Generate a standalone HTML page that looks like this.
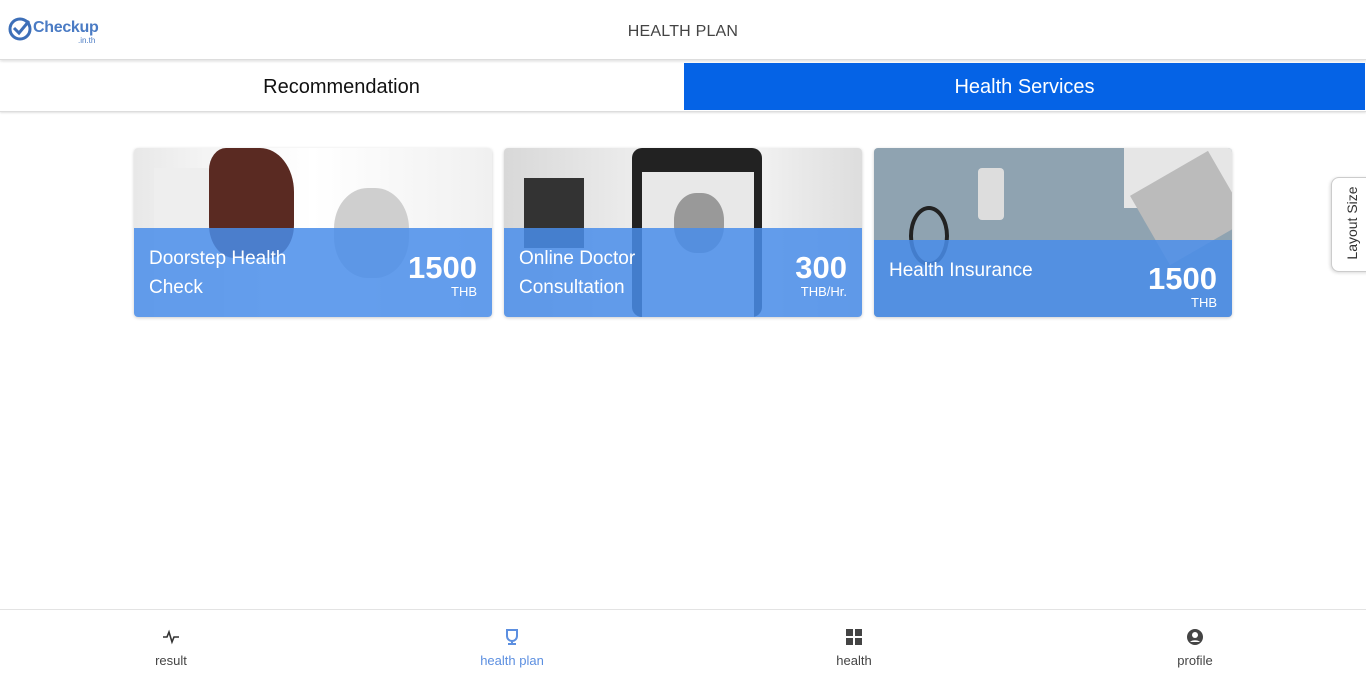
<!DOCTYPE html>
<html><head><meta charset="utf-8"><style>
*{box-sizing:border-box;margin:0;padding:0}
body{width:1366px;height:688px;overflow:hidden;background:#fff;font-family:"Liberation Sans",sans-serif;position:relative}
.hdr{position:absolute;top:0;left:0;width:1366px;height:60px;border-bottom:1px solid #ddd;box-shadow:0 1px 3px rgba(0,0,0,.15)}
.title{position:absolute;top:23px;left:0;width:1366px;text-align:center;font-size:16px;color:#444;letter-spacing:.2px}
.tabs{position:absolute;top:62px;left:0;width:1366px;height:50px;border-bottom:1px solid #ddd;box-shadow:0 1px 2px rgba(0,0,0,.12)}
.tab{position:absolute;top:0;height:49px;line-height:51px;text-align:center;font-size:20px}
.card{position:absolute;top:148px;width:358px;height:169px;border-radius:4px;overflow:hidden;box-shadow:0 1px 3px rgba(0,0,0,.2)}
.ov{position:absolute;left:0;right:0;bottom:0;background:rgba(73,141,234,.85);color:#fff}
.name{position:absolute;left:15px;font-size:19px;line-height:29px}
.price{position:absolute;right:15px;font-size:31px;font-weight:bold;text-align:right;line-height:30px}
.unit{position:absolute;right:15px;font-size:13px}
.nav{position:absolute;top:609px;left:0;width:1366px;height:79px;border-top:1px solid #e3e3e3}
.ni{position:absolute;top:0;width:120px;text-align:center;font-size:13px;color:#444}
.ni svg{display:block;margin:18px auto 7px}
</style></head><body>
<div class="hdr">
<svg style="position:absolute;left:8px;top:17px" width="24" height="24" viewBox="0 0 24 24"><circle cx="12" cy="12" r="10" fill="none" stroke="#3d6fb8" stroke-width="3"/><path d="M6 11l5 5 10-12" fill="none" stroke="#3d6fb8" stroke-width="3"/></svg>
<div style="position:absolute;left:33px;top:19px;font-size:16px;font-weight:bold;color:#4a7bc4;letter-spacing:-.3px">Checkup</div>
<div style="position:absolute;left:78px;top:36px;font-size:8px;color:#4a7bc4">.in.th</div>
<div class="title">HEALTH PLAN</div>
</div>
<div class="tabs">
<div class="tab" style="left:0;width:683px;color:#111">Recommendation</div>
<div class="tab" style="left:684px;width:681px;background:#0563e6;color:#fff;top:1px;height:47px;line-height:49px">Health Services</div>
</div>
<div class="card" style="left:134px;background:linear-gradient(90deg,#e8e8e8 0%,#f4f4f4 20%,#fff 50%,#f0f0f0 100%)">
<div style="position:absolute;left:20px;top:20px;width:70px;height:150px;background:#eee"></div>
<div style="position:absolute;left:75px;top:0;width:85px;height:110px;background:#5a2a22;border-radius:20% 40% 30% 30%"></div>
<div style="position:absolute;left:200px;top:40px;width:75px;height:90px;background:#cfcfcf;border-radius:45%"></div>
<div class="ov" style="height:89px"><div class="name" style="top:16px">Doorstep Health<br>Check</div><div class="price" style="top:25px">1500</div><div class="unit" style="top:56px">THB</div></div>
</div>
<div class="card" style="left:504px;background:linear-gradient(90deg,#d8d8d8,#eee 40%,#f2f2f2 70%,#ddd)">
<div style="position:absolute;left:128px;top:0;width:130px;height:169px;background:#222;border-radius:10px"></div>
<div style="position:absolute;left:138px;top:24px;width:112px;height:145px;background:#e8e8e8"></div>
<div style="position:absolute;left:170px;top:45px;width:50px;height:60px;background:#999;border-radius:45%"></div>
<div style="position:absolute;left:20px;top:30px;width:60px;height:70px;background:#333"></div>
<div class="ov" style="height:89px"><div class="name" style="top:16px">Online Doctor<br>Consultation</div><div class="price" style="top:25px">300</div><div class="unit" style="top:56px">THB/Hr.</div></div>
</div>
<div class="card" style="left:874px;background:#8fa3b1">
<div style="position:absolute;left:250px;top:0;width:108px;height:60px;background:#e6e6e6"></div>
<div style="position:absolute;left:270px;top:20px;width:90px;height:80px;background:#bbb;transform:rotate(-30deg)"></div>
<div style="position:absolute;left:104px;top:20px;width:26px;height:52px;background:#ddd;border-radius:4px"></div>
<div style="position:absolute;left:35px;top:58px;width:40px;height:60px;border:4px solid #222;border-radius:50%"></div>
<div class="ov" style="height:77px"><div class="name" style="top:16px">Health Insurance</div><div class="price" style="top:24px">1500</div><div class="unit" style="top:55px">THB</div></div>
</div>
<div style="position:absolute;left:1331px;top:177px;width:40px;height:95px;background:#fff;border:1px solid #ccc;border-radius:8px 0 0 8px;box-shadow:-1px 1px 3px rgba(0,0,0,.15)">
<div style="position:absolute;left:-20px;top:37px;width:80px;transform:rotate(-90deg);font-size:14px;color:#333;text-align:center">Layout Size</div></div>
<div class="nav">
<div class="ni" style="left:111px"><svg width="18" height="18" viewBox="0 0 18 18"><path d="M1 9h4l2-5 3 10 2-5h5" fill="none" stroke="#333" stroke-width="1.6"/></svg>result</div>
<div class="ni" style="left:452px;color:#5c8fe0"><svg width="18" height="18" viewBox="0 0 18 18"><path d="M4 2h10v6a5 5 0 0 1-10 0z M9 13v3 M5 16h8" fill="none" stroke="#5c8fe0" stroke-width="2"/></svg>health plan</div>
<div class="ni" style="left:794px"><svg width="18" height="18" viewBox="0 0 18 18"><path d="M1 1h7v7H1zM10 1h7v7h-7zM1 10h7v7H1zM10 10h7v7h-7z" fill="#444"/></svg>health</div>
<div class="ni" style="left:1135px"><svg width="18" height="18" viewBox="0 0 18 18"><circle cx="9" cy="9" r="8" fill="#444"/><circle cx="9" cy="7" r="3" fill="#fff"/><path d="M4 14a6 4 0 0 1 10 0" fill="#fff"/></svg>profile</div>
</div>
</body></html>
